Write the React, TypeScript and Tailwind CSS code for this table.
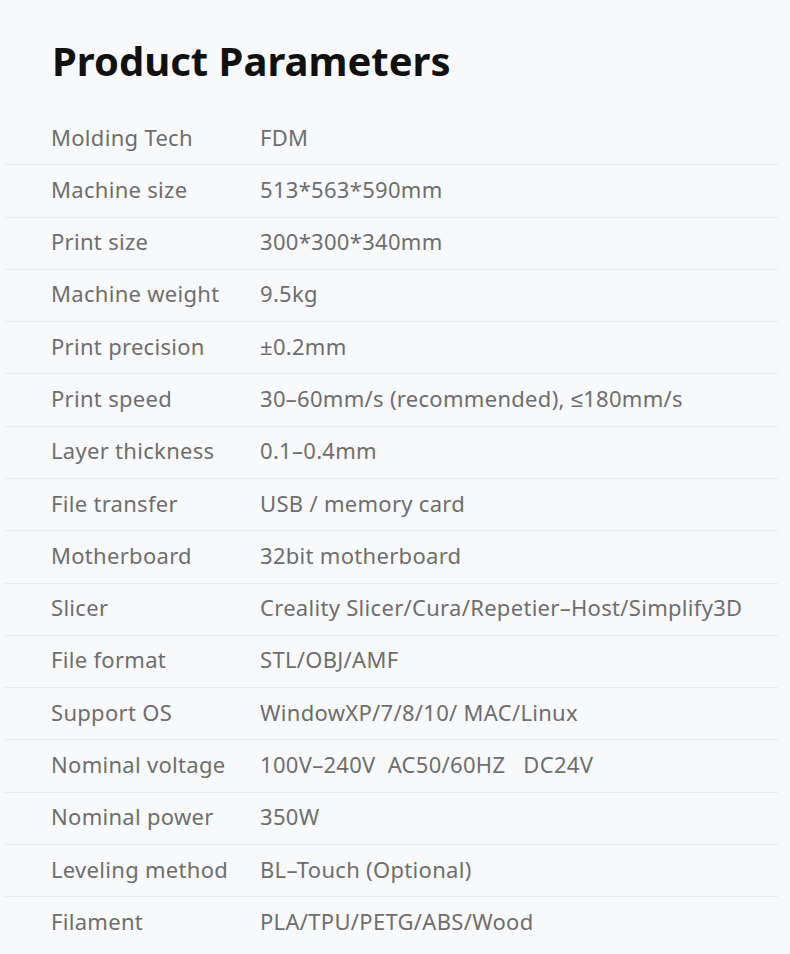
import React from "react";

const rows: [string, string][] = [
  ["Molding Tech", "FDM"],
  ["Machine size", "513*563*590mm"],
  ["Print size", "300*300*340mm"],
  ["Machine weight", "9.5kg"],
  ["Print precision", "±0.2mm"],
  ["Print speed", "30–60mm/s (recommended), ≤180mm/s"],
  ["Layer thickness", "0.1–0.4mm"],
  ["File transfer", "USB / memory card"],
  ["Motherboard", "32bit motherboard"],
  ["Slicer", "Creality Slicer/Cura/Repetier–Host/Simplify3D"],
  ["File format", "STL/OBJ/AMF"],
  ["Support OS", "WindowXP/7/8/10/ MAC/Linux"],
  ["Nominal voltage", "100V–240V\u00a0\u00a0AC50/60HZ\u00a0\u00a0\u00a0DC24V"],
  ["Nominal power", "350W"],
  ["Leveling method", "BL–Touch (Optional)"],
  ["Filament", "PLA/TPU/PETG/ABS/Wood"],
];

export default function App() {
  return (
    <div className="w-[790px] h-[954px] bg-[#f8f9fb] overflow-hidden" style={{ fontFamily: '"Noto Sans", sans-serif' }}>
      <div className="pt-[29px] pl-[52px] h-[113px]">
        <h1 className="text-[40px] leading-[64px] font-bold text-[#111]">Product Parameters</h1>
      </div>
      <div className="pl-[5px] pr-[12px]">
        {rows.map(([k, v], i) => (
          <div
            key={k}
            className={`flex items-center h-[52.29px] pb-[3px] text-[22px] tracking-[0.3px] text-[#6e6e6e] ${i < rows.length - 1 ? "border-b border-[#e9ebee]" : ""}`}
          >
            <div className="w-[255px] pl-[46px] shrink-0">{k}</div>
            <div className="whitespace-nowrap">{v}</div>
          </div>
        ))}
      </div>
    </div>
  );
}
